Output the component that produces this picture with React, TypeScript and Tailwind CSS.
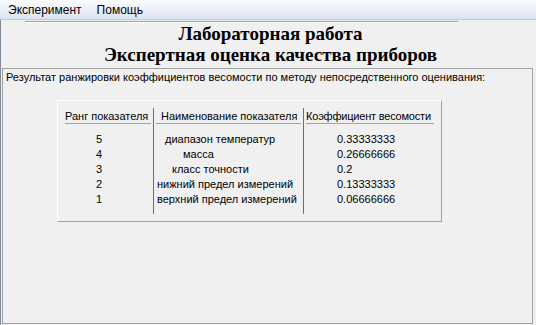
const rows = [
  { rank: '5', name: 'диапазон температур', pad: 'pl-[11px]', value: '0.33333333' },
  { rank: '4', name: 'масса', pad: 'pl-[29px]', value: '0.26666666' },
  { rank: '3', name: 'класс точности', pad: 'pl-[18px]', value: '0.2' },
  { rank: '2', name: 'нижний предел измерений', pad: 'pl-[3px]', value: '0.13333333' },
  { rank: '1', name: 'верхний предел измерений', pad: 'pl-[3px]', value: '0.06666666' },
];

export default function App() {
  return (
    <div className="w-[536px] h-[325px] overflow-hidden bg-[#f0f0f0] text-black font-['Liberation_Sans',Arial,sans-serif]">
      {/* menu bar */}
      <div className="h-[20px] flex items-center gap-[15px] pl-[8px] text-[12px] bg-linear-to-b from-[#fbfcfe] to-[#dbe3f2] border-b border-[#c3cad6]">
        <span>Эксперимент</span>
        <span>Помощь</span>
      </div>

      <div className="h-[305px] border-l border-[#7f8a99]">
        {/* title */}
        <div className="pt-[1px]">
          <div className="ml-[24px] w-[433px] border-t border-[#a0a0a0] border-b border-b-white" />
          <div className="font-['Liberation_Serif','Times_New_Roman',serif] font-bold text-[19px] leading-[21px] text-center pl-[4px]">
            <div>Лабораторная работа</div>
            <div>Экспертная оценка качества приборов</div>
          </div>
        </div>

        {/* result group */}
        <div className="mt-[3px] ml-[1px] w-[531px] h-[256px] border border-[#a0a0a0] text-[11px]">
          <div className="pt-[2px] pl-[3px] leading-[13px] whitespace-nowrap">
            Результат ранжировки коэффициентов весомости по методу непосредственного оценивания:
          </div>

          <div className="mt-[16px] ml-[54px] w-[385px] h-[122px] border-t border-l border-white border-r border-b border-r-[#a0a0a0] border-b-[#a0a0a0] pt-[7px]">
            <div className="flex ml-[7px] h-[106px] leading-[15px] whitespace-nowrap">
              <div className="w-[89px] border-r border-[#6d6d6d]">
                <div className="h-[16px] mr-[2px] border-b border-[#a0a0a0] pt-[1px]">Ранг показателя</div>
                <div className="pt-[8px] pl-[31px]">
                  {rows.map((r) => (
                    <div key={r.rank}>{r.rank}</div>
                  ))}
                </div>
              </div>
              <div className="w-[150px] border-r border-[#6d6d6d]">
                <div className="h-[16px] mx-[2px] border-b border-[#a0a0a0] pt-[1px] pl-[5px]">Наименование показателя</div>
                <div className="pt-[8px]">
                  {rows.map((r) => (
                    <div key={r.rank} className={r.pad}>{r.name}</div>
                  ))}
                </div>
              </div>
              <div className="w-[130px]">
                <div className="h-[16px] ml-[2px] border-b border-[#a0a0a0] pt-[1px] tracking-[-0.2px]">Коэффициент весомости</div>
                <div className="pt-[8px] pl-[33px]">
                  {rows.map((r) => (
                    <div key={r.rank}>{r.value}</div>
                  ))}
                </div>
              </div>
            </div>
          </div>
        </div>
      </div>
    </div>
  );
}
